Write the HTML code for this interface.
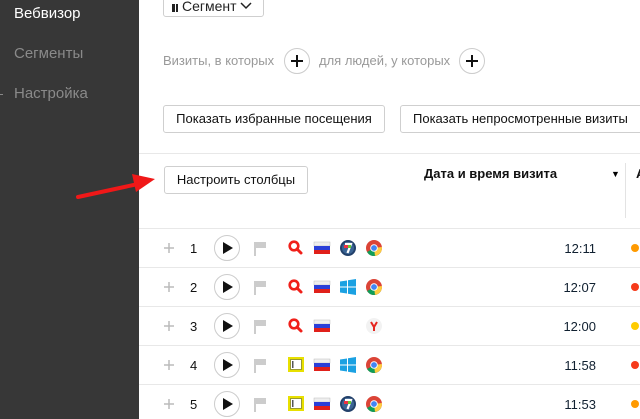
<!DOCTYPE html>
<html><head><meta charset="utf-8"><style>
*{margin:0;padding:0;box-sizing:border-box}
body{width:640px;height:419px;overflow:hidden;background:#fff;font-family:"Liberation Sans","DejaVu Sans",sans-serif;position:relative}
.a{position:absolute}
.side{left:0;top:0;width:139px;height:419px;background:#373737}
.side div{position:absolute;left:14px;font-size:15px;color:#8a8a8a}
.btn{position:absolute;border:1px solid #cfcfcf;border-radius:3px;background:#fff;font-size:13px;color:#111;text-align:center}
.circ{position:absolute;width:26px;height:26px;border:1px solid #ccc;border-radius:50%}
.hl{position:absolute;left:139px;right:0;height:1px;background:#e8e8e8}
.t{position:absolute;font-size:13px;color:#111}
.g{color:#999}
</style></head><body>
<div class="a side">
<div style="top:5px;color:#fff">Вебвизор</div>
<div style="top:45px">Сегменты</div>
<div style="top:85px">Настройка</div>
<div style="left:0;top:94px;width:3px;height:1px;background:#888"></div>
</div>

<div class="btn" style="left:163px;top:-10px;width:101px;height:27px;line-height:23px;padding-top:4px;font-size:14px;color:#222;text-align:left;padding-left:8px">
<span style="display:inline-block;width:6px;height:8px;border-left:3px solid #222;border-right:2px solid #222;vertical-align:-1px;margin-right:4px"></span>Сегмент <svg width="12" height="8" viewBox="0 0 12 8" style="vertical-align:1px"><path d="M1 1 L6 6 L11 1" fill="none" stroke="#222" stroke-width="1.5"/></svg></div>

<div class="t g" style="left:163px;top:53px">Визиты, в которых</div>
<div class="circ" style="left:284px;top:48px"></div>
<svg class="a" style="left:289px;top:53px" width="16" height="16"><path d="M8 2V14M2 8H14" stroke="#111" stroke-width="2"/></svg>
<div class="t g" style="left:319px;top:53px">для людей, у которых</div>
<div class="circ" style="left:459px;top:48px"></div>
<svg class="a" style="left:464px;top:53px" width="16" height="16"><path d="M8 2V14M2 8H14" stroke="#111" stroke-width="2"/></svg>

<div class="btn" style="left:163px;top:105px;width:222px;height:28px;line-height:26px">Показать избранные посещения</div>
<div class="btn" style="left:400px;top:105px;width:245px;height:28px;line-height:26px;text-align:left;padding-left:12px">Показать непросмотренные визиты</div>

<div class="hl" style="top:153px"></div>
<div class="btn" style="left:164px;top:166px;width:144px;height:28px;line-height:26px">Настроить столбцы</div>
<div class="t" style="left:424px;top:166px;font-weight:bold;font-size:13px">Дата и время визита</div>
<div class="a" style="left:611px;top:169px;font-size:9px">▼</div>
<div class="a" style="left:625px;top:163px;width:1px;height:55px;background:#e3e3e3"></div>
<div class="t" style="left:636px;top:166px;font-weight:bold">А</div>

<svg class="a" style="left:0;top:0" width="170" height="220"><path d="M78 197 L138 184" stroke="#f01818" stroke-width="4" stroke-linecap="round"/><path d="M132 174 L155 179 L136 192 Z" fill="#f01818"/></svg>

<div class="hl" style="top:228px"></div>
<div class="hl" style="top:267px"></div>
<div class="hl" style="top:306px"></div>
<div class="hl" style="top:345px"></div>
<div class="hl" style="top:384px"></div>

<svg width="0" height="0" style="position:absolute"><defs>
<g id="mag"><circle cx="6" cy="6" r="4.3" fill="none" stroke="#f0201a" stroke-width="2.6"/><path d="M9 9 L13 13" stroke="#f0201a" stroke-width="3" stroke-linecap="round"/></g>
<g id="box"><rect x="0" y="0" width="16" height="15" fill="#e8e000"/><rect x="2.5" y="2.5" width="11" height="10" fill="#fff" stroke="#9a9a30"/><rect x="4" y="4" width="1.5" height="7" fill="#555"/></g>
<g id="ru"><rect x="0" y="0" width="16" height="4" fill="#eee" stroke="#bbb" stroke-width=".5"/><rect x="0" y="4" width="16" height="4" fill="#2a3fd8"/><rect x="0" y="8" width="16" height="4" fill="#e0201a"/></g>
<g id="w7"><circle cx="8" cy="8" r="8" fill="#22406a"/><circle cx="8" cy="8" r="6" fill="#3a6494"/><path d="M5 4H11L7.5 13" stroke="#fff" stroke-width="2.2" fill="none"/><path d="M4 5h4v3H4z" fill="#e34"/><path d="M8 5h3v3H8z" fill="#6c3"/></g>
<g id="win"><path d="M0 2.5L7 1.5V7.5H0Z M8 1.3L16 0V7.5H8Z M0 8.5H7V14.5L0 13.5Z M8 8.5H16V16L8 14.7Z" fill="#1ba1e2"/></g>
<g id="chr"><circle cx="8" cy="8" r="8" fill="#db4437"/><path d="M8 8 L1.07 12 A8 8 0 0 0 15.2 11.4Z" fill="#0f9d58"/><path d="M8 8 L15.9 7 A8 8 0 0 1 9 15.9Z" fill="#ffcd40"/><circle cx="8" cy="8" r="3.8" fill="#fff"/><circle cx="8" cy="8" r="2.9" fill="#4285f4"/></g>
<g id="ya"><circle cx="8" cy="8" r="8" fill="#f2f2f2"/><path d="M5 4 L8 9 L11 4 M8 9 V13" stroke="#e52620" stroke-width="2" fill="none"/></g>
<g id="play"><circle cx="13" cy="13" r="12.5" fill="#fff" stroke="#ccc"/><path d="M9 7 L19 13 L9 19Z" fill="#111"/></g>
<g id="flag"><path d="M1 2V16" stroke="#aaa" stroke-width="1.2"/><path d="M2 2H12V8H2Z" fill="#ccc"/></g>
<g id="pl"><path d="M5 0V10M0 5H10" stroke="#bbb" stroke-width="1.5"/></g>
</defs></svg>

<svg class="a" style="left:0;top:0" width="640" height="419">
<g font-family="Liberation Sans, sans-serif" font-size="13">
<use href="#pl" x="164" y="243"/><text x="190" y="253" fill="#111">1</text><use href="#play" x="214" y="235"/><use href="#flag" x="254" y="240"/><use href="#mag" x="288" y="240"/><use href="#ru" x="314" y="242"/><use href="#w7" x="340" y="240"/><use href="#chr" x="366" y="240"/><text x="596" y="253" text-anchor="end" fill="#102030">12:11</text><circle cx="635" cy="248" r="4" fill="#ff9a00"/>
<use href="#pl" x="164" y="282"/><text x="190" y="292" fill="#111">2</text><use href="#play" x="214" y="274"/><use href="#flag" x="254" y="279"/><use href="#mag" x="288" y="279"/><use href="#ru" x="314" y="281"/><use href="#win" x="340" y="279"/><use href="#chr" x="366" y="279"/><text x="596" y="292" text-anchor="end" fill="#102030">12:07</text><circle cx="635" cy="287" r="4" fill="#f63a1a"/>
<use href="#pl" x="164" y="321"/><text x="190" y="331" fill="#111">3</text><use href="#play" x="214" y="313"/><use href="#flag" x="254" y="318"/><use href="#mag" x="288" y="318"/><use href="#ru" x="314" y="320"/><use href="#ya" x="366" y="318"/><text x="596" y="331" text-anchor="end" fill="#102030">12:00</text><circle cx="635" cy="326" r="4" fill="#ffcc00"/>
<use href="#pl" x="164" y="360"/><text x="190" y="370" fill="#111">4</text><use href="#play" x="214" y="352"/><use href="#flag" x="254" y="357"/><use href="#box" x="288" y="357"/><use href="#ru" x="314" y="359"/><use href="#win" x="340" y="357"/><use href="#chr" x="366" y="357"/><text x="596" y="370" text-anchor="end" fill="#102030">11:58</text><circle cx="635" cy="365" r="4" fill="#f63a1a"/>
<use href="#pl" x="164" y="399"/><text x="190" y="409" fill="#111">5</text><use href="#play" x="214" y="391"/><use href="#flag" x="254" y="396"/><use href="#box" x="288" y="396"/><use href="#ru" x="314" y="398"/><use href="#w7" x="340" y="396"/><use href="#chr" x="366" y="396"/><text x="596" y="409" text-anchor="end" fill="#102030">11:53</text><circle cx="635" cy="404" r="4" fill="#ff9a00"/>
</g></svg>
</body></html>
